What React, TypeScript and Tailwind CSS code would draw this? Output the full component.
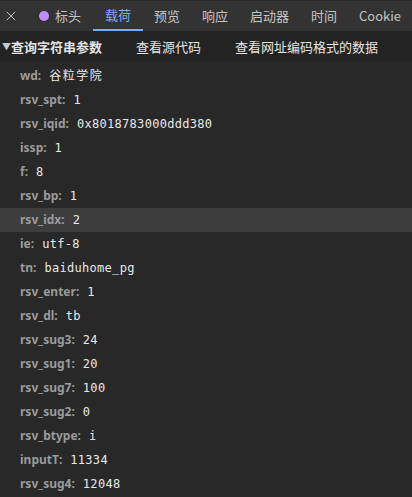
import { X } from 'lucide-react'

const tabs = ['标头', '载荷', '预览', '响应', '启动器', '时间', 'Cookie']

const params: Array<[string, string]> = [
  ['wd', '谷粒学院'],
  ['rsv_spt', '1'],
  ['rsv_iqid', '0x8018783000ddd380'],
  ['issp', '1'],
  ['f', '8'],
  ['rsv_bp', '1'],
  ['rsv_idx', '2'],
  ['ie', 'utf-8'],
  ['tn', 'baiduhome_pg'],
  ['rsv_enter', '1'],
  ['rsv_dl', 'tb'],
  ['rsv_sug3', '24'],
  ['rsv_sug1', '20'],
  ['rsv_sug7', '100'],
  ['rsv_sug2', '0'],
  ['rsv_btype', 'i'],
  ['inputT', '11334'],
  ['rsv_sug4', '12048'],
]

const cjk = "font-['Noto_Sans_CJK_SC','Noto_Sans',sans-serif]"

export default function App() {
  return (
    <div className={`w-[412px] h-[497px] overflow-hidden bg-[#282828] ${cjk}`}>
      {/* Tab bar */}
      <div className="flex items-stretch h-[32px] bg-[#333333] border-t border-[#2a2a2a] border-b border-b-[#232323] text-[13px] text-[#c4c4c4] whitespace-nowrap">
        <div className="flex items-center justify-center w-[22px] ps-[1px]">
          <X size={16} strokeWidth={1.5} className="text-[#c4c4c4]" />
        </div>
        <div className="flex items-center gap-[6px] ps-[17px] pe-[12px]">
          <span className="w-[10px] h-[10px] rounded-full bg-[#c58af9]" />
          <span>{tabs[0]}</span>
        </div>
        <div className="flex items-center px-[12px] text-[#7cacf8] border-b-2 border-[#7cacf8]">
          {tabs[1]}
        </div>
        {tabs.slice(2).map((t) => (
          <div key={t} className="flex items-center px-[11px]">
            {t}
          </div>
        ))}
      </div>

      {/* Section header */}
      <div className="flex items-center h-[29px] bg-[#232323] text-[13px] text-[#e3e3e3] whitespace-nowrap">
        <span className="text-[9px] ps-[2px] text-[#c8c8c8]">▼</span>
        <span className="font-bold">查询字符串参数</span>
        <span className="ms-[34px]">查看源代码</span>
        <span className="ms-[34px]">查看网址编码格式的数据</span>
      </div>

      {/* Params */}
      <div className="flex flex-col pt-[3px]">
        {params.map(([k, v]) => (
          <div
            key={k}
            className={`flex items-center h-[24px] ps-[20px] text-[12px] ${
              k === 'rsv_idx' ? 'bg-[#3d3d3d]' : ''
            }`}
          >
            <span className="font-bold text-[#9b9b9b] font-['Noto_Sans','Noto_Sans_CJK_SC',sans-serif]">
              {k}:
            </span>
            <span
              className={`ms-[8px] text-[#e8e8e8] font-['DejaVu_Sans_Mono','Noto_Sans_CJK_SC',monospace] ${
                k === 'wd' ? 'tracking-[1.5px]' : 'tracking-[0.3px]'
              }`}
            >
              {v}
            </span>
          </div>
        ))}
      </div>
    </div>
  )
}
